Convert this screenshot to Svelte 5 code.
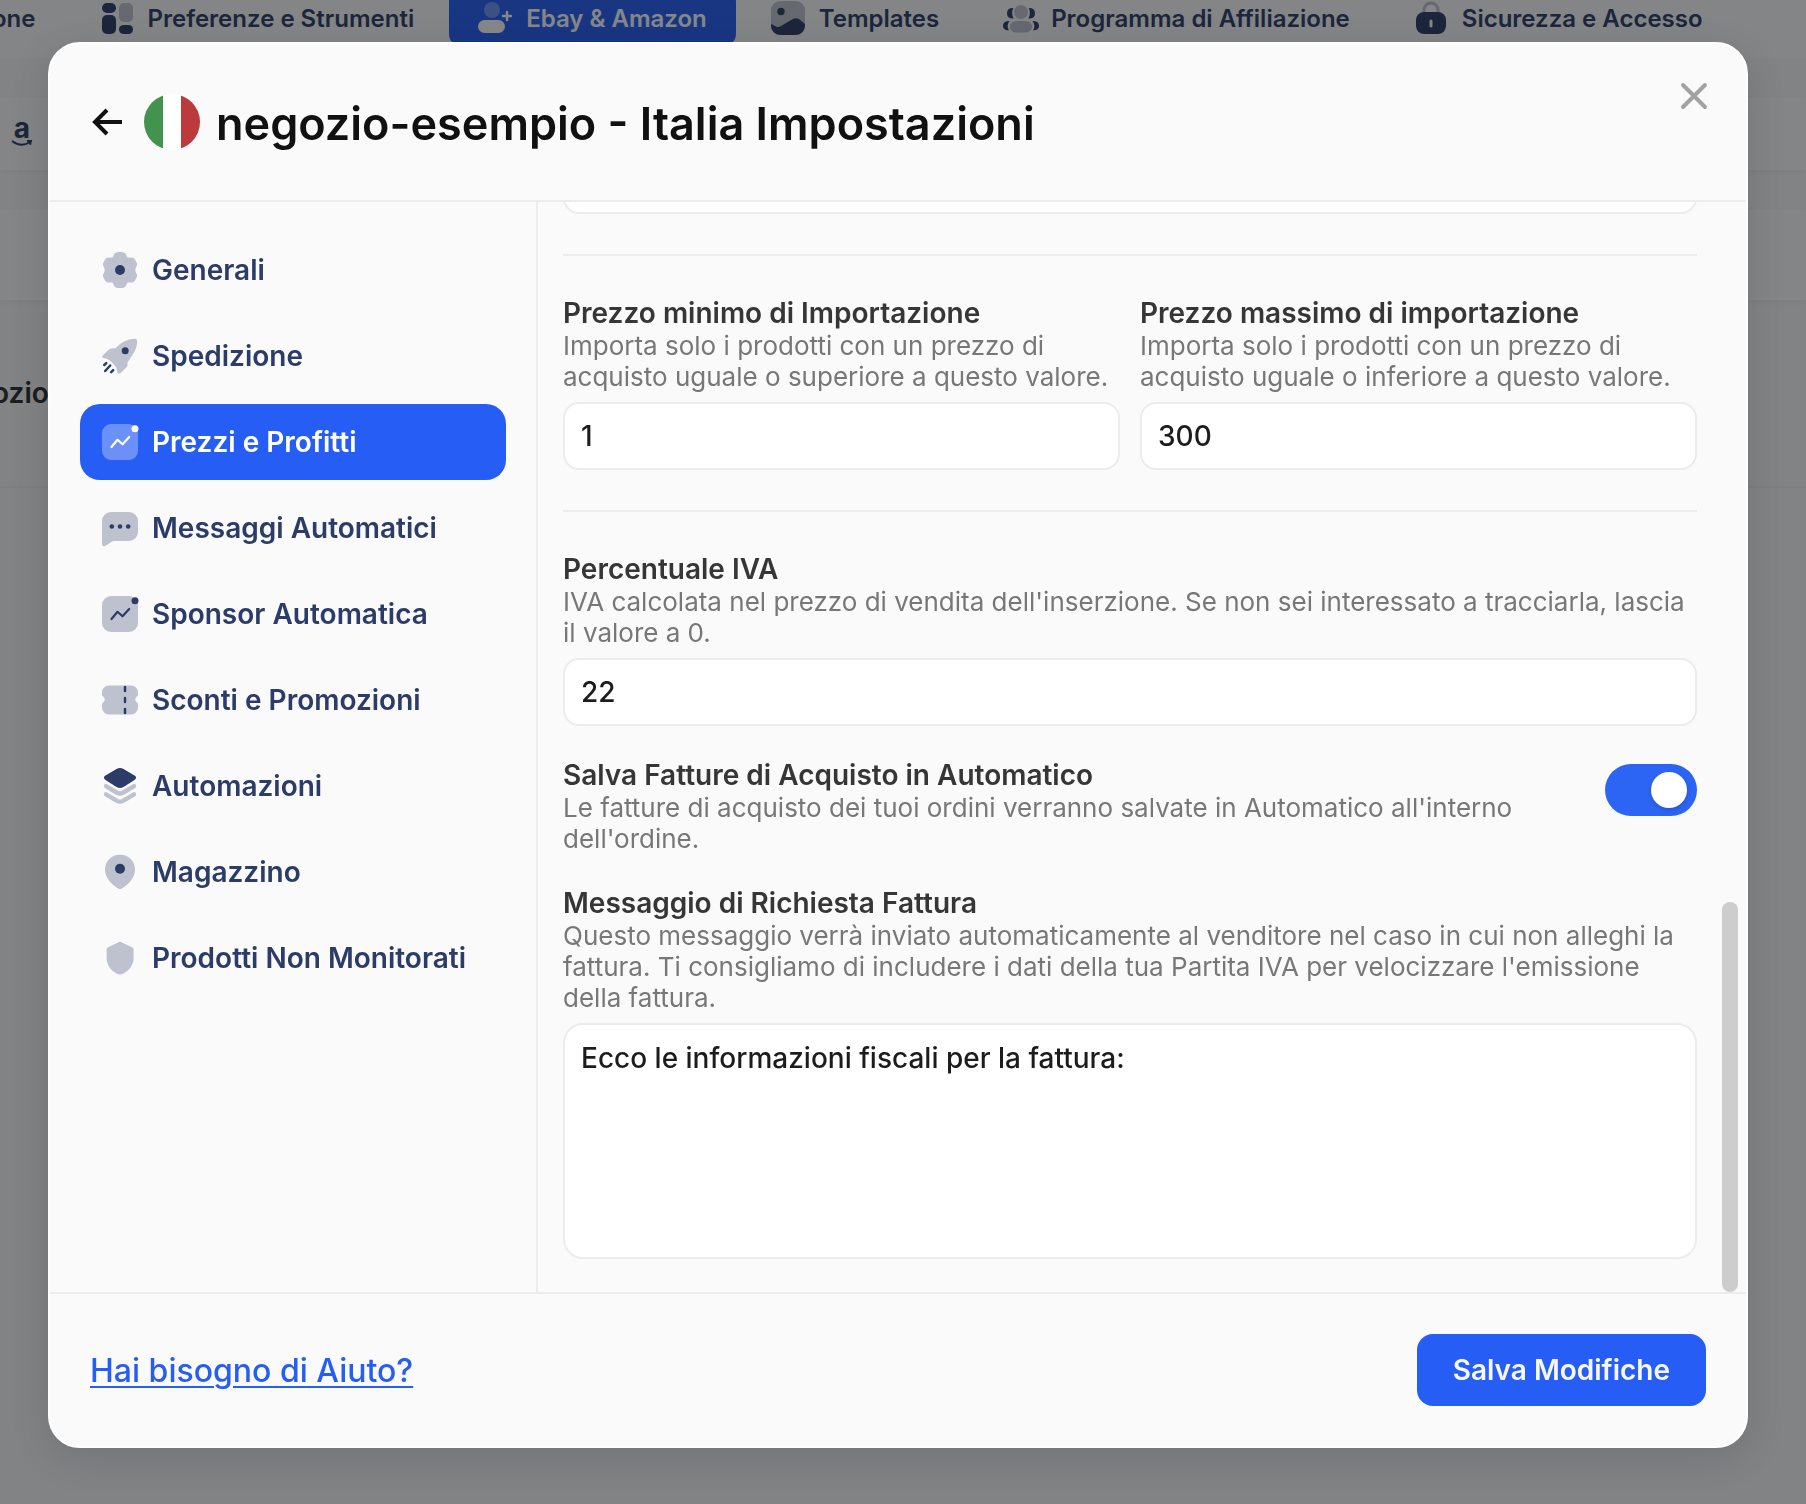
<script>
  let tabs = [
    { name: "prefs", label: "Preferenze e Strumenti" },
    { name: "user", label: "Ebay & Amazon", active: true },
    { name: "image", label: "Templates" },
    { name: "people", label: "Programma di Affiliazione" },
    { name: "lock", label: "Sicurezza e Accesso" },
  ];

  let sections = [
    { name: "gear", label: "Generali" },
    { name: "rocket", label: "Spedizione" },
    { name: "chart", label: "Prezzi e Profitti" },
    { name: "message", label: "Messaggi Automatici" },
    { name: "chart", label: "Sponsor Automatica" },
    { name: "ticket", label: "Sconti e Promozioni" },
    { name: "layers", label: "Automazioni" },
    { name: "pin", label: "Magazzino" },
    { name: "shield", label: "Prodotti Non Monitorati" },
  ];

  let current = $state(2);
  let minPrice = $state("1");
  let maxPrice = $state("300");
  let vat = $state("22");
  let autoSave = $state(true);
  let message = $state("Ecco le informazioni fiscali per la fattura:");
</script>

{#snippet tabIcon(name)}
  <svg class="tab-icon" viewBox="0 0 34 34" aria-hidden="true">
    {#if name === "prefs"}
      <rect class="dark" x="2" y="2" width="14" height="10" rx="5" />
      <rect class="dark" x="2" y="14" width="14" height="19" rx="5" />
      <rect class="soft" x="19" y="2" width="14" height="19" rx="5" />
      <rect class="dark" x="19" y="24" width="14" height="9" rx="4.5" />
    {:else if name === "user"}
      <circle class="soft" cx="14" cy="9" r="8" />
      <rect class="dark" x="0" y="19" width="27" height="13" rx="6.5" />
      <path class="line" d="M29 11v8M25 15h8" />
    {:else if name === "image"}
      <rect class="soft" width="34" height="34" rx="9" />
      <circle class="dark" cx="10" cy="10.5" r="3.7" />
      <path
        class="dark"
        d="M0 23l4 2q3 2 6 0l10-6q4-3 8-1l6 5v2a9 9 0 0 1-9 9H9a9 9 0 0 1-9-9z"
      />
    {:else if name === "people"}
      <circle class="soft" cx="18" cy="11" r="7" />
      <rect class="soft" x="7" y="20" width="22" height="11.5" rx="5.700" />
      <path
        class="dark"
        d="M10.300 7q-2.600 5 .4 10.500Q4 17.800 4 12.300T10.300 7zM25.700 7q2.600 5-.4 10.500 6.700.3 6.700-5.200T25.700 7zM6.500 20q-3.500 5-.6 9.200Q0 29.500 0 24.800 0 20.200 6.500 20zM29.500 20q3.500 5 .6 9.200 5.900.3 5.900-4.400 0-4.600-6.500-4.800z"
      />
    {:else if name === "lock"}
      <path class="shackle" d="M10 13V9a7 7 0 0 1 14 0v4" />
      <rect class="dark" x="2" y="11" width="30" height="22" rx="8" />
      <path class="hole" d="M17 20v5" />
    {/if}
  </svg>
{/snippet}

{#snippet icon(name)}
  <svg class="icon" viewBox="0 0 36 36" aria-hidden="true">
    {#if name === "gear"}
      <path
        class="soft"
        d="M12.500 1.500Q14 0 16 0h4q2 0 3.500 1.500l2 4H30q2 0 3 2l2 4q.5 2-1 3.500-1.500 3 0 6 1.500 1.500 1 3.500l-2 4q-1 2-3 2h-4.500l-2 4Q22 36 20 36h-4q-2 0-3.500-1.500l-2-4H6q-2 0-3-2l-2-4Q.5 22.500 2 21q1.500-3 0-6Q.5 13.500 1 11.500l2-4q1-2 3-2h4.500z"
      />
      <circle class="dark" cx="18" cy="18" r="5" />
    {:else if name === "rocket"}
      <path
        class="soft"
        d="M32.500.8q2.700-.2 2.700 2.700Q35 11 30 17.500q-2 3-4.500 7V27q.2 1-.8 2l-6 6q-1.500 1.200-3 0l-1.500-5.500q-4-6-9-8.500L.7 19.800Q-.5 19 .6 17.500L7 11.500q1-1 2.500-1l4-.2Q21 1.500 32.500.8z"
      />
      <circle class="dark" cx="23.200" cy="12.700" r="3.500" />
      <path class="line" d="M2.200 27l2-1.800M3.200 33l5-5.500M9.200 34.200l2-2" />
    {:else if name === "chart"}
      <rect class="soft" width="36" height="36" rx="9" />
      <path class="line thin" d="M9.500 23l6-7.200 5 4.500 6.700-7.300" />
      <circle class="dark" cx="33" cy="4.700" r="3.500" />
    {:else if name === "message"}
      <path
        class="soft"
        d="M9 2h18a9 9 0 0 1 9 9v11a9 9 0 0 1-9 9H12q-1.500 0-3 1.200l-5 3.300Q0 37.500 0 34V11a9 9 0 0 1 9-9z"
      />
      <circle class="dark" cx="9.800" cy="16.500" r="2.300" />
      <circle class="dark" cx="18" cy="16.500" r="2.300" />
      <circle class="dark" cx="26.200" cy="16.500" r="2.300" />
    {:else if name === "ticket"}
      <path
        class="soft"
        d="M7 3.500h22a7 7 0 0 1 7 7V13q0 1-1.500 1.800a3.700 3.700 0 0 0 0 5.400Q36 21 36 22v3.500a7 7 0 0 1-7 7H7a7 7 0 0 1-7-7V22q0-1 1.500-1.800a3.700 3.700 0 0 0 0-5.400Q0 14 0 13v-2.500a7 7 0 0 1 7-7z"
      />
      <path class="line" d="M23 5v4M23 16v4M23 27v4" />
    {:else if name === "layers"}
      <path
        class="dark"
        d="M14.500 1Q18-.8 21.500 1L32.500 7.500q3.200 2.200 0 4.500l-11 7q-3.500 1.800-7 0L3.500 12Q.3 9.700 3.500 7.500z"
      />
      <path
        class="stack"
        d="M4 18.200l11 6.500q3 1.500 6 0l11-6.500M4 26.400l11 6.500q3 1.500 6 0l11-6.500"
      />
    {:else if name === "pin"}
      <path
        class="soft"
        d="M18 .7C26.500.7 33 7 33 15.500 33 25 24 32 20 34.500q-2 1.200-4 0C12 32 3 25 3 15.500 3 7 9.500.7 18 .7z"
      />
      <circle class="dark" cx="18" cy="14.700" r="5" />
    {:else if name === "shield"}
      <path
        class="soft"
        d="M16.500 2.200q1.500-1 3 0l10.500 5q1.500.8 1.600 2.300V18c0 8-5.600 14-12.100 16.200q-1.500.6-3 0C10 32 4.600 26 4.600 18V9.500Q4.600 8 6 7.200z"
      />
    {/if}
  </svg>
{/snippet}

<div class="page">
  <nav class="tabs">
    <a class="tab cut" href="#gestione">one</a>
    {#each tabs as tab}
      <a class="tab" class:active={tab.active} href="#{tab.name}">
        {@render tabIcon(tab.name)}
        {tab.label}
      </a>
    {/each}
  </nav>
  <div class="band markets">
    <span class="amazon">
      a
      <svg viewBox="0 0 22 7" aria-hidden="true">
        <path d="M1 1q9 7 18 1M16 1l4-.2-1 4" />
      </svg>
    </span>
  </div>
  <div class="band filters"></div>
  <div class="store">ozio</div>
</div>

<div class="overlay">
  <div class="modal" role="dialog" aria-modal="true" aria-labelledby="title">
    <header>
      <button class="plain" aria-label="Indietro">
        <svg class="back" viewBox="0 0 30 28" aria-hidden="true">
          <path d="M15 2L3 14l12 12M3 14h27" />
        </svg>
      </button>
      <svg class="flag" viewBox="0 0 56 56" aria-hidden="true">
        <clipPath id="round"><circle cx="28" cy="28" r="28" /></clipPath>
        <g clip-path="url(#round)">
          <rect width="56" height="56" fill="#fff" />
          <rect width="19" height="56" fill="#43934f" />
          <rect x="37" width="19" height="56" fill="#bc3a3c" />
        </g>
      </svg>
      <h1 id="title">negozio-esempio - Italia Impostazioni</h1>
      <button class="plain close" aria-label="Chiudi">
        <svg viewBox="0 0 28 28" aria-hidden="true">
          <path d="M3 3l22 22M25 3L3 25" />
        </svg>
      </button>
    </header>

    <div class="body">
      <aside>
        {#each sections as section, i}
          <button
            class="section"
            class:active={current === i}
            onclick={() => (current = i)}
          >
            {@render icon(section.name)}
            {section.label}
          </button>
        {/each}
      </aside>

      <main>
        <div class="form">
          <input class="box" aria-label="Valore" />
          <hr />
          <div class="columns">
            <div class="field">
              <label for="min">Prezzo minimo di Importazione</label>
              <p>
                Importa solo i prodotti con un prezzo di acquisto uguale o
                superiore a questo valore.
              </p>
              <input class="box" id="min" bind:value={minPrice} />
            </div>
            <div class="field">
              <label for="max">Prezzo massimo di importazione</label>
              <p>
                Importa solo i prodotti con un prezzo di acquisto uguale o
                inferiore a questo valore.
              </p>
              <input class="box" id="max" bind:value={maxPrice} />
            </div>
          </div>
          <hr />
          <div class="field">
            <label for="vat">Percentuale IVA</label>
            <p>
              IVA calcolata nel prezzo di vendita dell'inserzione. Se non sei
              interessato a tracciarla, lascia il valore a 0.
            </p>
            <input class="box" id="vat" bind:value={vat} />
          </div>
          <div class="switch-row">
            <div class="field">
              <label for="save">Salva Fatture di Acquisto in Automatico</label>
              <p>
                Le fatture di acquisto dei tuoi ordini verranno salvate in
                Automatico all'interno dell'ordine.
              </p>
            </div>
            <input
              class="switch"
              id="save"
              type="checkbox"
              role="switch"
              bind:checked={autoSave}
            />
          </div>
          <div class="field">
            <label for="message">Messaggio di Richiesta Fattura</label>
            <p>
              Questo messaggio verrà inviato automaticamente al venditore nel
              caso in cui non alleghi la fattura. Ti consigliamo di includere i
              dati della tua Partita IVA per velocizzare l'emissione della
              fattura.
            </p>
            <textarea class="box" id="message" bind:value={message}></textarea>
          </div>
        </div>
        <div class="scroll-thumb"></div>
      </main>
    </div>

    <footer>
      <a class="help" href="#aiuto">Hai bisogno di Aiuto?</a>
      <button class="save">Salva Modifiche</button>
    </footer>
  </div>
</div>

<style>
  :global(body) {
    font-family: Inter, "Liberation Sans", sans-serif;
    background: #f6f7f8;
    overflow: hidden;
  }
  * {
    box-sizing: border-box;
  }
  button,
  input,
  textarea {
    font: inherit;
  }
  a {
    text-decoration: none;
  }

  .soft {
    fill: #bec2cf;
  }
  .dark {
    fill: #2c3c68;
  }
  .line {
    fill: none;
    stroke: #2c3c68;
    stroke-width: 2.5;
    stroke-linecap: round;
    stroke-linejoin: round;
  }
  .thin {
    stroke-width: 2.2;
  }
  .stack {
    fill: none;
    stroke: #bec2cf;
    stroke-width: 4.4;
    stroke-linecap: round;
  }
  .active .soft {
    fill: rgba(255, 255, 255, 0.32);
  }
  .active .dark {
    fill: #fff;
  }
  .active .line {
    stroke: #fff;
  }

  /* page behind the dialog */
  .page {
    height: 100vh;
    overflow: hidden;
  }
  .tabs {
    display: flex;
    align-items: flex-start;
    gap: 6px;
    height: 68px;
    margin: -10px 0 0 -8px;
    background: #fafafa;
    white-space: nowrap;
  }
  .tab {
    display: flex;
    align-items: center;
    gap: 14px;
    height: 56px;
    padding: 0 29px;
    border-radius: 12px;
    font-size: 24px;
    font-weight: 600;
    color: #2c3c68;
  }
  .tab.cut {
    padding-left: 0;
  }
  .tab.active {
    background: #255df5;
    color: #fff;
  }
  .tab-icon {
    width: 34px;
    height: 34px;
    overflow: visible;
  }
  .shackle {
    fill: none;
    stroke: #bec2cf;
    stroke-width: 3;
  }
  .hole {
    stroke: #fafafa;
    stroke-width: 3;
    stroke-linecap: round;
  }
  .band {
    margin-top: 40px;
    border: solid #fdfdfd;
    border-width: 2px 0;
    background: #fafafa;
    box-shadow: 0 2px 8px rgba(20, 20, 40, 0.05);
  }
  .markets {
    height: 72px;
    padding: 16px 12px;
  }
  .amazon {
    display: flex;
    flex-direction: column;
    align-items: center;
    width: 20px;
    font-size: 28px;
    font-weight: 700;
    line-height: 24px;
    color: #2c3c68;
  }
  .amazon svg {
    width: 22px;
    height: 7px;
    fill: none;
    stroke: #2c3c68;
    stroke-width: 2;
  }
  .filters {
    height: 90px;
  }
  .store {
    display: flex;
    align-items: center;
    height: 188px;
    margin-left: -8px;
    border-bottom: 2px solid #eeeeef;
    font-size: 28px;
    font-weight: 600;
    color: #2a2a2a;
  }

  /* dialog */
  .overlay {
    position: fixed;
    inset: 0;
    display: flex;
    padding: 42px 58px 56px 48px;
    background: rgba(14, 15, 17, 0.5);
  }
  .modal {
    flex: 1;
    display: flex;
    flex-direction: column;
    min-width: 0;
    border: 2px solid #fff;
    border-radius: 32px;
    background: #fafafa;
    box-shadow: 0 10px 40px rgba(0, 0, 0, 0.12);
  }
  header {
    display: flex;
    align-items: center;
    height: 158px;
    padding: 0 38px 0 42px;
    border-bottom: 2px solid #ececec;
  }
  .plain {
    display: flex;
    padding: 0;
    border: 0;
    background: none;
    cursor: pointer;
  }
  .plain svg {
    fill: none;
    stroke-width: 4;
  }
  .back {
    width: 30px;
    height: 28px;
    stroke: #111;
  }
  .flag {
    width: 56px;
    height: 56px;
    margin: 0 16px 0 22px;
  }
  h1 {
    margin: 0;
    padding-top: 4px;
    font-size: 45px;
    font-weight: 600;
    line-height: 56px;
    color: #111;
  }
  .close {
    align-self: flex-start;
    margin: 38px 0 0 auto;
  }
  .close svg {
    width: 28px;
    height: 28px;
    stroke: #a2a2a2;
    stroke-linecap: round;
  }

  .body {
    flex: 1;
    display: flex;
    min-height: 0;
  }
  aside {
    display: flex;
    flex-direction: column;
    gap: 10px;
    width: 488px;
    padding: 30px;
    border-right: 2px solid #ececec;
  }
  .section {
    display: flex;
    align-items: center;
    gap: 14px;
    height: 76px;
    padding: 0 22px;
    border: 0;
    border-radius: 20px;
    background: none;
    font-size: 28px;
    font-weight: 600;
    color: #2c3c68;
    white-space: nowrap;
    cursor: pointer;
  }
  .section.active {
    background: #255df5;
    color: #fff;
  }
  .icon {
    width: 36px;
    height: 36px;
    overflow: visible;
  }

  main {
    position: relative;
    flex: 1;
    display: flex;
    flex-direction: column;
    justify-content: flex-end;
    min-width: 0;
    overflow: hidden;
    padding: 0 49px 33px 25px;
  }
  .scroll-thumb {
    position: absolute;
    right: 8px;
    bottom: 0;
    width: 16px;
    height: 390px;
    border-radius: 8px;
    background: #cdcdcd;
  }
  .form {
    display: flex;
    flex-direction: column;
    gap: 32px;
  }
  hr {
    width: 100%;
    height: 2px;
    margin: 8px 0;
    border: 0;
    background: #ececec;
  }
  .columns {
    display: grid;
    grid-template-columns: 1fr 1fr;
    gap: 20px;
  }
  .field {
    display: flex;
    flex-direction: column;
  }
  label {
    font-size: 28px;
    font-weight: 600;
    line-height: 34px;
    color: #363636;
  }
  p {
    margin: 0;
    font-size: 26px;
    line-height: 31px;
    color: #777;
  }
  .box {
    width: 100%;
    height: 68px;
    padding: 0 16px;
    border: 2px solid #ececec;
    border-radius: 16px;
    background: #fff;
    font-size: 28px;
    font-weight: 500;
    line-height: 34px;
    color: #1c1c1c;
    outline: none;
  }
  .field .box {
    margin-top: 10px;
  }
  textarea.box {
    height: 236px;
    padding: 16px;
    border-radius: 20px;
    resize: none;
  }
  .switch-row {
    display: flex;
    align-items: flex-start;
    gap: 60px;
  }
  .switch-row .field {
    flex: 1;
  }
  .switch {
    appearance: none;
    display: flex;
    align-items: center;
    flex-shrink: 0;
    width: 92px;
    height: 52px;
    margin: 6px 0 0;
    padding: 0 10px;
    border-radius: 26px;
    background: #c8cad2;
    cursor: pointer;
  }
  .switch::before {
    content: "";
    width: 36px;
    height: 36px;
    border-radius: 50%;
    background: #fff;
    box-shadow: 0 2px 4px rgba(0, 0, 0, 0.15);
  }
  .switch:checked {
    justify-content: flex-end;
    background: #2c64f4;
  }

  footer {
    display: flex;
    align-items: center;
    justify-content: space-between;
    padding: 40px;
    border-top: 2px solid #ececec;
  }
  .help {
    font-size: 32px;
    font-weight: 500;
    color: #255df5;
    text-decoration: underline;
    text-decoration-thickness: 2px;
    text-underline-offset: 4px;
  }
  .save {
    height: 72px;
    padding: 0 36px;
    border: 0;
    border-radius: 16px;
    background: #255df5;
    font-size: 28px;
    font-weight: 600;
    color: #f7f8ff;
    cursor: pointer;
  }
</style>
